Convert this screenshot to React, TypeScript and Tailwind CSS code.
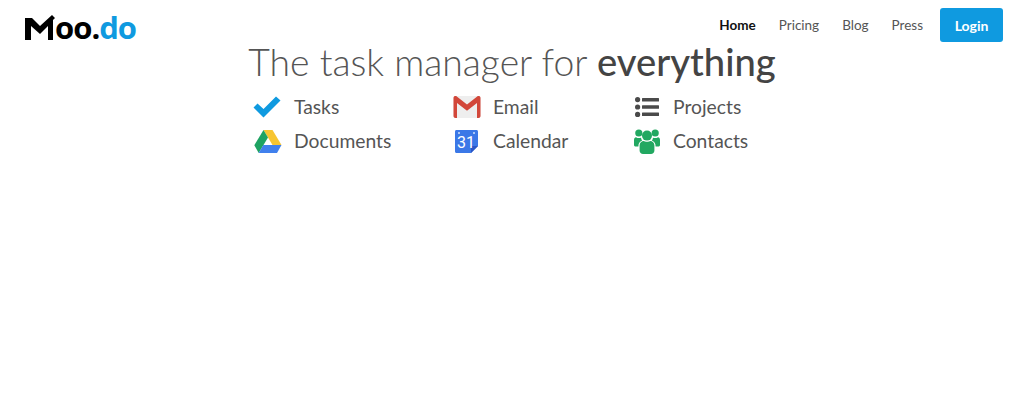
import React from 'react';

const NAV_LINKS = [
  { label: 'Home', className: 'pt-px font-bold text-[#111]' },
  { label: 'Pricing', className: 'pt-px text-[#555]' },
  { label: 'Blog', className: 'pt-px text-[#555]' },
  { label: 'Press', className: 'pt-px text-[#555]' },
];

function CheckIcon() {
  return (
    <svg width="28" height="22" viewBox="0 0 28 22" className="ml-[-1px]">
      <path d="M0.5 11.5 L4.5 7.5 L10.5 13 L23 0.5 L27.5 4.5 L10.5 21.5 Z" fill="#0f9ae0" strokeLinejoin="round" />
    </svg>
  );
}

function DriveIcon() {
  return (
    <svg width="28" height="23" viewBox="0 0 28 23">
      <path d="M9.5 0 H18.5 L27.5 15 H18.5 Z" fill="#f7c531" />
      <path d="M9.5 0 L14 7.5 L4.7 23 L0.3 15.2 Z" fill="#1ea362" />
      <path d="M9.3 15 H27.5 L23 23 H4.7 Z" fill="#4080ed" />
    </svg>
  );
}

function GmailIcon() {
  return (
    <svg width="28" height="22" viewBox="0 0 28 22">
      <rect x="0.5" y="0" width="27" height="22" rx="2" fill="#eeeeee" />
      <path d="M3 0 L14 9 L25 0 V3 L14 12.5 L3 3 Z" fill="#dedede" />
      <path d="M0.5 2 C0.5 0.2 2.5 -0.4 3.8 0.5 L14 8.4 L24.2 0.5 C25.5 -0.4 27.5 0.2 27.5 2 V20 C27.5 21.2 26.7 22 25.5 22 H24 V7 L14 14.8 L4 7 V22 H2.5 C1.3 22 0.5 21.2 0.5 20 Z" fill="#d2473a" />
    </svg>
  );
}

function CalendarIcon() {
  return (
    <svg width="23" height="23" viewBox="0 0 23 23" className="ml-[2px]">
      <path d="M1.5 0 H21.5 C22.4 0 23 0.6 23 1.5 V16 L16 23 H1.5 C0.6 23 0 22.4 0 21.5 V1.5 C0 0.6 0.6 0 1.5 0 Z" fill="#3b78e7" />
      <path d="M16 23 V17.5 C16 16.6 16.6 16 17.5 16 H23 Z" fill="#2a56c6" />
      <circle cx="4" cy="3" r="1" fill="#cfe0fb" />
      <circle cx="19" cy="3" r="1" fill="#cfe0fb" />
      <text x="11" y="18" textAnchor="middle" fontSize="16" fill="#fff" fontFamily="Roboto, sans-serif">31</text>
    </svg>
  );
}

function ListIcon() {
  return (
    <svg width="24" height="20" viewBox="0 0 24 20" fill="#4a4a4a" className="ml-[2px]">
      <circle cx="2.6" cy="2.6" r="2.6" />
      <circle cx="2.6" cy="10" r="2.6" />
      <circle cx="2.6" cy="17.4" r="2.6" />
      <rect x="7" y="1" width="17" height="3.4" rx="0.5" />
      <rect x="7" y="8.3" width="17" height="3.4" rx="0.5" />
      <rect x="7" y="15.6" width="17" height="3.4" rx="0.5" />
    </svg>
  );
}

function UsersIcon() {
  return (
    <svg width="26" height="25" viewBox="0 0 26 25" fill="#22a861" className="ml-[1px]">
      <circle cx="13" cy="6.6" r="5" />
      <circle cx="4.8" cy="4" r="3.6" />
      <circle cx="21.2" cy="4" r="3.6" />
      <path d="M5.6 16.5 C5.6 13.5 7.8 12 9.6 12 C11 13 15 13 16.4 12 C18.2 12 20.4 13.5 20.4 16.5 V21.5 C20.4 23.6 18.8 25 17 25 H9 C7.2 25 5.6 23.6 5.6 21.5 Z" />
      <path d="M0 11 C0 9 1 8.2 2 8.2 C3.5 9.2 5 9.2 7 8.8 C7.2 10 7.6 11 8.2 11.6 C5.5 12.5 4.4 14.5 4.4 17.5 H2 C1 17.5 0 17 0 16 Z" />
      <path d="M26 11 C26 9 25 8.2 24 8.2 C22.5 9.2 21 9.2 19 8.8 C18.8 10 18.4 11 17.8 11.6 C20.5 12.5 21.6 14.5 21.6 17.5 H24 C25 17.5 26 17 26 16 Z" />
    </svg>
  );
}

const FEATURES = [
  { label: 'Tasks', icon: <CheckIcon /> },
  { label: 'Email', icon: <GmailIcon /> },
  { label: 'Projects', icon: <ListIcon /> },
  { label: 'Documents', icon: <DriveIcon /> },
  { label: 'Calendar', icon: <CalendarIcon /> },
  { label: 'Contacts', icon: <UsersIcon /> },
];

function Logo() {
  return (
    <a className="flex items-end font-['Open_Sans',sans-serif] text-[31px] font-bold leading-[25px] tracking-[-1px]">
      <svg width="30" height="25" viewBox="0 0 30 25">
        <path d="M0 3 H7 L15 11 L27 0 L30 3 L28 5 V25 H23 V11 L15 19 L6 11 V25 H0 Z" fill="#000" />
      </svg>
      <span className="text-black">oo.</span>
      <span className="text-[#0f9ae0]">do</span>
    </a>
  );
}

export default function App() {
  return (
    <div className="min-h-[417px] bg-white font-['Lato',sans-serif]">
      <header className="flex h-[39px] items-start justify-between pl-[25px] pr-[21px] pt-2">
        <div className="pt-[7px]">
          <Logo />
        </div>
        <nav className="flex items-center gap-[23px] text-[13.5px]">
          {NAV_LINKS.map((link) => (
            <a key={link.label} className={link.className}>
              {link.label}
            </a>
          ))}
          <button className="ml-[-6px] h-[34px] w-[63px] rounded-[3px] bg-[#0f9ae0] text-[14px] font-bold text-white">
            Login
          </button>
        </nav>
      </header>

      <main className="flex flex-col items-center">
        <h1 className="text-[37.3px] leading-[44px] font-light text-[#555]">
          The task manager for <span className="text-[38.2px] font-medium text-[#444]">everything</span>
        </h1>
        <div className="mt-[6px] grid w-[516px] grid-cols-[199px_180px_137px]">
          {FEATURES.map((feature) => (
            <div key={feature.label} className="flex h-[34px] items-center text-[19.3px] text-[#555]">
              <span className="flex w-[40px] shrink-0 items-center">{feature.icon}</span>
              {feature.label}
            </div>
          ))}
        </div>
      </main>
    </div>
  );
}
